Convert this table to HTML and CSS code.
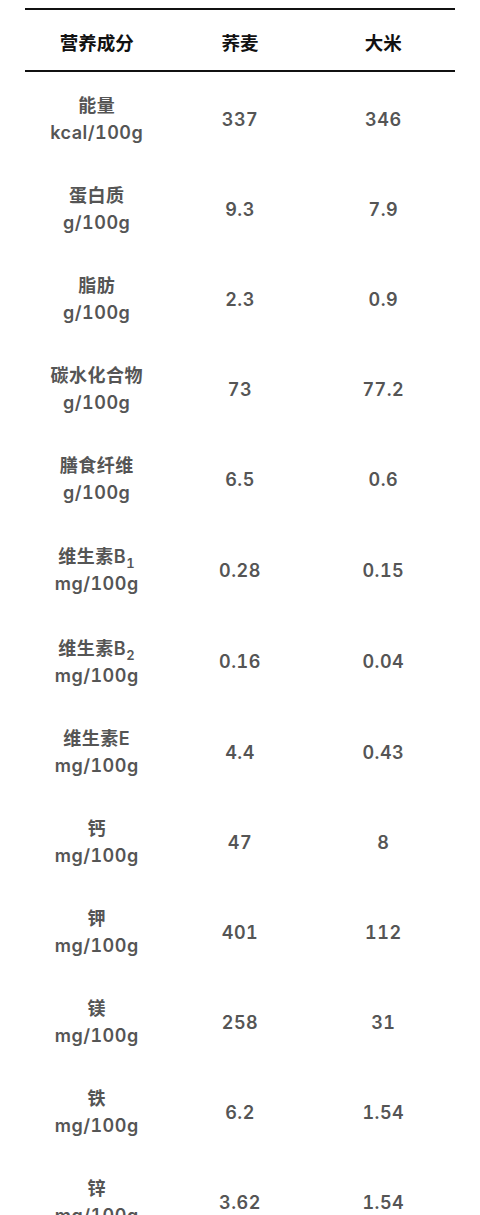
FILE: index.html
```html
<!DOCTYPE html>
<html lang="zh-CN">
<head>
<meta charset="utf-8">
<link rel="stylesheet" href="styles.css">
</head>
<body>
<div class="wrap">
<table class="nutri">
<thead>
<tr><th>营养成分</th><th>荞麦</th><th>大米</th></tr>
</thead>
<tbody>
<tr class="first"><td>能量<br>kcal/100g</td><td>337</td><td>346</td></tr>
<tr><td>蛋白质<br>g/100g</td><td>9.3</td><td>7.9</td></tr>
<tr><td>脂肪<br>g/100g</td><td>2.3</td><td>0.9</td></tr>
<tr><td>碳水化合物<br>g/100g</td><td>73</td><td>77.2</td></tr>
<tr><td>膳食纤维<br>g/100g</td><td>6.5</td><td>0.6</td></tr>
<tr class="tall"><td>维生素B<sub>1</sub><br>mg/100g</td><td>0.28</td><td>0.15</td></tr>
<tr class="tall"><td>维生素B<sub>2</sub><br>mg/100g</td><td>0.16</td><td>0.04</td></tr>
<tr><td>维生素E<br>mg/100g</td><td>4.4</td><td>0.43</td></tr>
<tr><td>钙<br>mg/100g</td><td>47</td><td>8</td></tr>
<tr><td>钾<br>mg/100g</td><td>401</td><td>112</td></tr>
<tr><td>镁<br>mg/100g</td><td>258</td><td>31</td></tr>
<tr><td>铁<br>mg/100g</td><td>6.2</td><td>1.54</td></tr>
<tr><td>锌<br>mg/100g</td><td>3.62</td><td>1.54</td></tr>
</tbody>
</table>
</div>
</body>
</html>
```
FILE: styles.css
```css
html, body {
  margin: 0;
  padding: 0;
  background: #fff;
}
.wrap {
  padding: 8px 25px 0;
}
.nutri {
  width: 100%;
  border-collapse: collapse;
  table-layout: fixed;
  font-family: "Inter", "Noto Sans CJK SC", sans-serif;
  font-size: 18px;
  line-height: 27px;
  text-align: center;
  font-variant-numeric: tabular-nums;
}
.nutri thead th {
  border-top: 2px solid #111;
  border-bottom: 2px solid #111;
  padding: 20px 0 13px;
  font-size: 18.5px;
  font-weight: 700;
  color: #111;
}
.nutri td {
  padding: 18px 0;
  color: #555;
  font-weight: 600;
  letter-spacing: 0.5px;
  vertical-align: middle;
}
.nutri tr.first td {
  padding-top: 20px;
}
.nutri tr.tall td {
  padding: 19px 0 18.5px;
}
.nutri sub {
  font-size: 13px;
  line-height: 0;
}
```
